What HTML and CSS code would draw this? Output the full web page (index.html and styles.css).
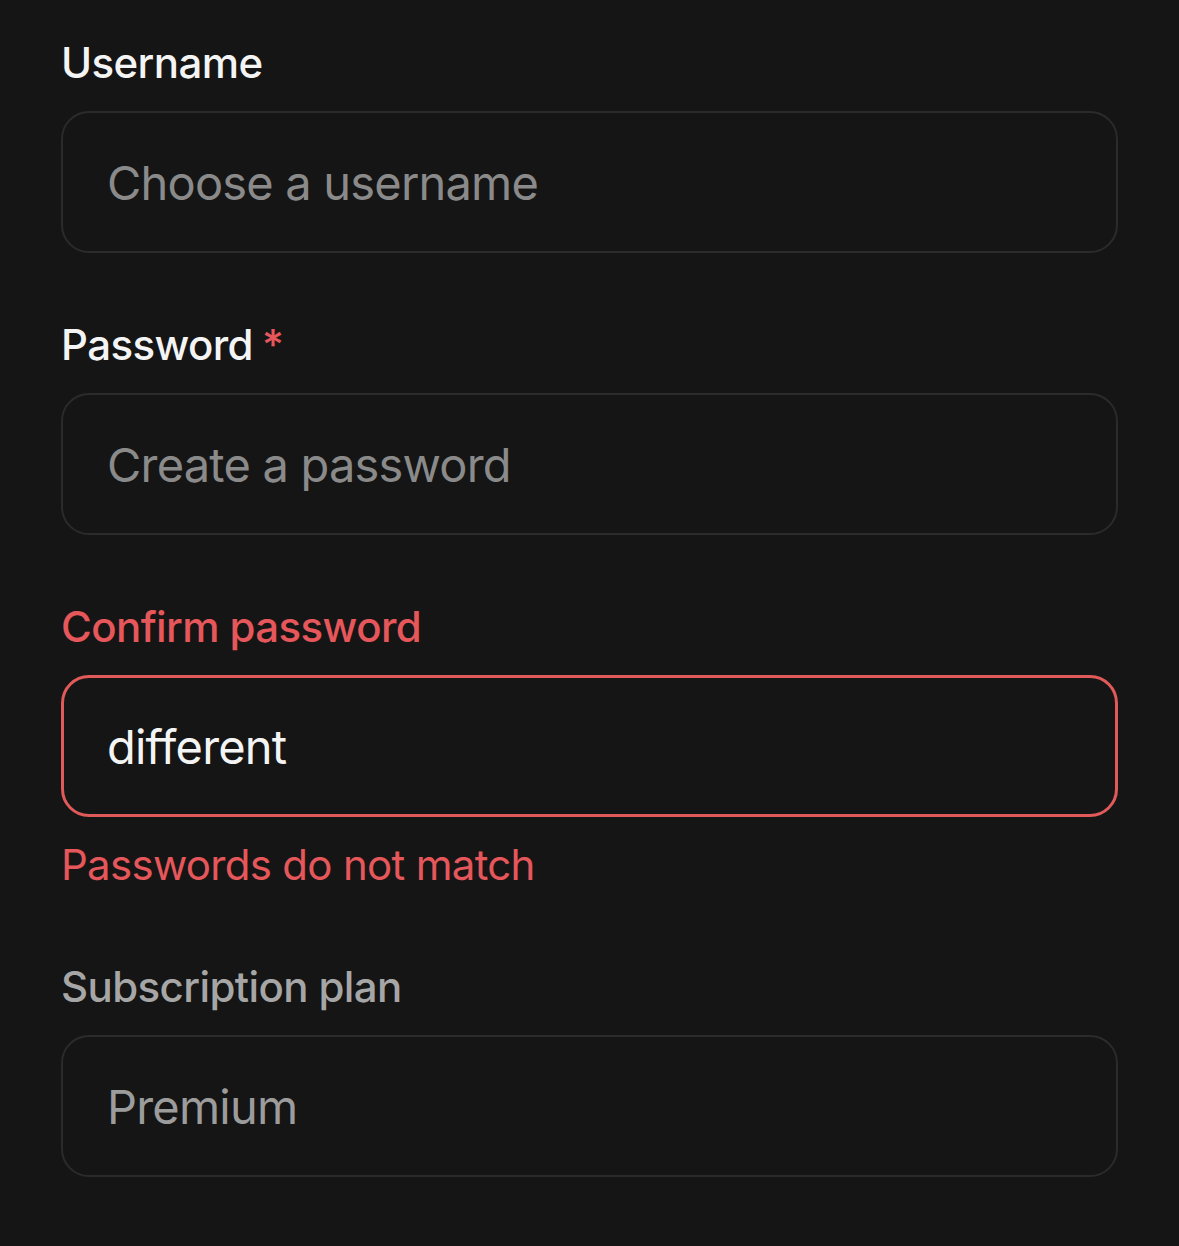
FILE: index.html
```html
<!DOCTYPE html>
<html lang="en">
<head>
<meta charset="utf-8">
<title>Sign up form</title>
<link rel="stylesheet" href="styles.css">
</head>
<body>
<form class="form">
  <div class="field">
    <label class="label" for="username">Username</label>
    <input class="input" id="username" type="text" placeholder="Choose a username">
  </div>
  <div class="field">
    <label class="label" for="password">Password<span class="required">*</span></label>
    <input class="input" id="password" type="password" placeholder="Create a password">
  </div>
  <div class="field field-error">
    <label class="label" for="confirm">Confirm password</label>
    <input class="input" id="confirm" type="text" value="different">
    <p class="error-text">Passwords do not match</p>
  </div>
  <div class="field field-disabled">
    <label class="label" for="plan">Subscription plan</label>
    <input class="input" id="plan" type="text" value="Premium" disabled>
  </div>
</form>
</body>
</html>
```

FILE: styles.css
```css
html, body {
  margin: 0;
  padding: 0;
  background: #151515;
}

body {
  font-family: Inter, "Noto Sans", "Liberation Sans", sans-serif;
  color: #f4f4f4;
}

.form {
  display: flex;
  flex-direction: column;
  gap: 66px;
  padding: 37px 61px 0 61px;
}

.field {
  display: flex;
  flex-direction: column;
}

.label {
  font-size: 42px;
  line-height: 51px;
  font-weight: 500;
  letter-spacing: -0.6px;
  color: #f4f4f4;
  margin-bottom: 23px;
}

.required {
  color: #e5575a;
  margin-left: 9px;
}

.input {
  box-sizing: border-box;
  width: 100%;
  height: 142px;
  margin: 0;
  padding: 0 44px;
  border: 2px solid #2b2b2b;
  border-radius: 28px;
  background: #151515;
  font-family: inherit;
  font-size: 47px;
  font-weight: 400;
  letter-spacing: -0.8px;
  color: #f4f4f4;
  outline: none;
}

.input::placeholder {
  color: #8a8a8a;
  opacity: 1;
}

.field-error .label {
  color: #e5575a;
}

.field-error .input {
  border: 3px solid #e05a5a;
  padding: 0 43px;
}

.error-text {
  margin: 22px 0 5px 0;
  font-size: 42px;
  line-height: 51px;
  font-weight: 400;
  letter-spacing: -0.7px;
  color: #e5575a;
}

.field-disabled .label {
  color: #a6a6a6;
}

.field-disabled .input {
  color: #9c9c9c;
  -webkit-text-fill-color: #9c9c9c;
  background: #151515;
}
```
